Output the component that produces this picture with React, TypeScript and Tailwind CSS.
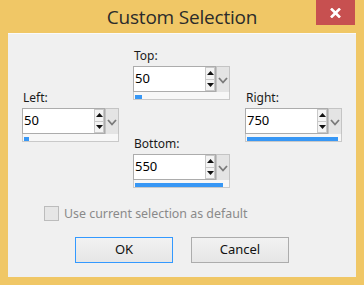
import React from "react";

interface SpinProps {
  label: string;
  value: string;
  fill: string;
  className?: string;
}

function UpArrow() {
  return (
    <svg width="7" height="4" viewBox="0 0 7 4">
      <polygon points="0,4 7,4 3.5,0" fill="#111" />
    </svg>
  );
}

function DownArrow() {
  return (
    <svg width="7" height="4" viewBox="0 0 7 4">
      <polygon points="0,0 7,0 3.5,4" fill="#111" />
    </svg>
  );
}

function SpinField({ label, value, fill, className }: SpinProps) {
  return (
    <div className={"flex flex-col w-[97px] " + (className ?? "")}>
      <div className="h-[15px] leading-[15px] text-[12px] text-[#1a1a1a] mb-[3px] pl-[1px]">
        {label}
      </div>
      <div className="flex items-start">
        <div className="flex w-[83px] h-[26px] border border-[#acacac] bg-white">
          <div className="flex-1 text-[13px] leading-[15px] pt-[4px] pl-[1px] text-black">
            {value}
          </div>
          <div className="flex flex-col w-[10px]">
            <div className="flex-1 flex items-center justify-center border border-[#c9c9c9] bg-[#f4f4f4]">
              <UpArrow />
            </div>
            <div className="flex-1 flex items-center justify-center border border-t-0 border-[#c9c9c9] bg-[#f4f4f4]">
              <DownArrow />
            </div>
          </div>
        </div>
        <div className="flex items-center justify-center w-[14px] h-[28px] border border-[#c4c4c4] bg-[#e4e4e4]">
          <svg width="10" height="7" viewBox="0 0 10 7">
            <polyline
              points="1,1 5,5.5 9,1"
              fill="none"
              stroke="#7a7a7a"
              strokeWidth="1.8"
            />
          </svg>
        </div>
      </div>
      <div className="h-[8px] -mt-[2px] border border-t-0 border-[#c9c9c9] bg-[#f7f7f7] pl-[1px] pt-[3px]">
        <div className={"h-[4px] bg-[#3797f5] " + fill} />
      </div>
    </div>
  );
}

export default function App() {
  return (
    <div className="w-[364px] h-[285px] bg-[#f0c766] flex flex-col font-['Noto_Sans',sans-serif]">
      <div className="grid grid-cols-[1fr_auto_1fr] h-[33px]">
        <div />
        <div className="text-[19px] leading-[33px] text-[#2b2b2b] font-['Open_Sans',sans-serif] tracking-[-0.2px] pt-[1px]">
          Custom Selection
        </div>
        <div className="flex justify-end">
          <div className="w-[39px] h-[25px] mr-[9px] bg-[#c75050] flex items-center justify-center">
            <svg width="11" height="10" viewBox="0 0 11 10">
              <path d="M1 0.5 L10 9.5 M10 0.5 L1 9.5" stroke="#fff" strokeWidth="2.6" />
            </svg>
          </div>
        </div>
      </div>

      <div className="mx-[8px] h-[244px] bg-[#f0f0f0] border-t border-[#fafafa] flex flex-col">
        <div className="flex pt-[14px] pl-[14px]">
          <SpinField label="Left:" value="50" fill="w-[5px]" className="mt-[42px]" />
          <div className="flex flex-col ml-[14px]">
            <SpinField label="Top:" value="50" fill="w-[7px]" />
            <SpinField label="Bottom:" value="550" fill="w-[88px]" className="mt-[36px]" />
          </div>
          <SpinField label="Right:" value="750" fill="w-[91px]" className="ml-[15px] mt-[42px]" />
        </div>

        <div className="flex items-center gap-[5px] mt-[18px] pl-[36px]">
          <div className="w-[15px] h-[15px] border border-[#bcbcbc] bg-[#e6e6e6]" />
          <span className="text-[12.4px] leading-[15px] text-[#8a8a8a]">
            Use current selection as default
          </span>
        </div>

        <div className="flex gap-[18px] mt-[16px] pl-[67px]">
          <button className="w-[98px] h-[26px] border border-[#3399ff] bg-gradient-to-b from-[#f2f2f2] to-[#e6e6e6] text-[13px] text-[#111]">
            OK
          </button>
          <button className="w-[98px] h-[26px] border border-[#acacac] bg-gradient-to-b from-[#f2f2f2] to-[#e6e6e6] text-[13px] text-[#111]">
            Cancel
          </button>
        </div>
      </div>
    </div>
  );
}
